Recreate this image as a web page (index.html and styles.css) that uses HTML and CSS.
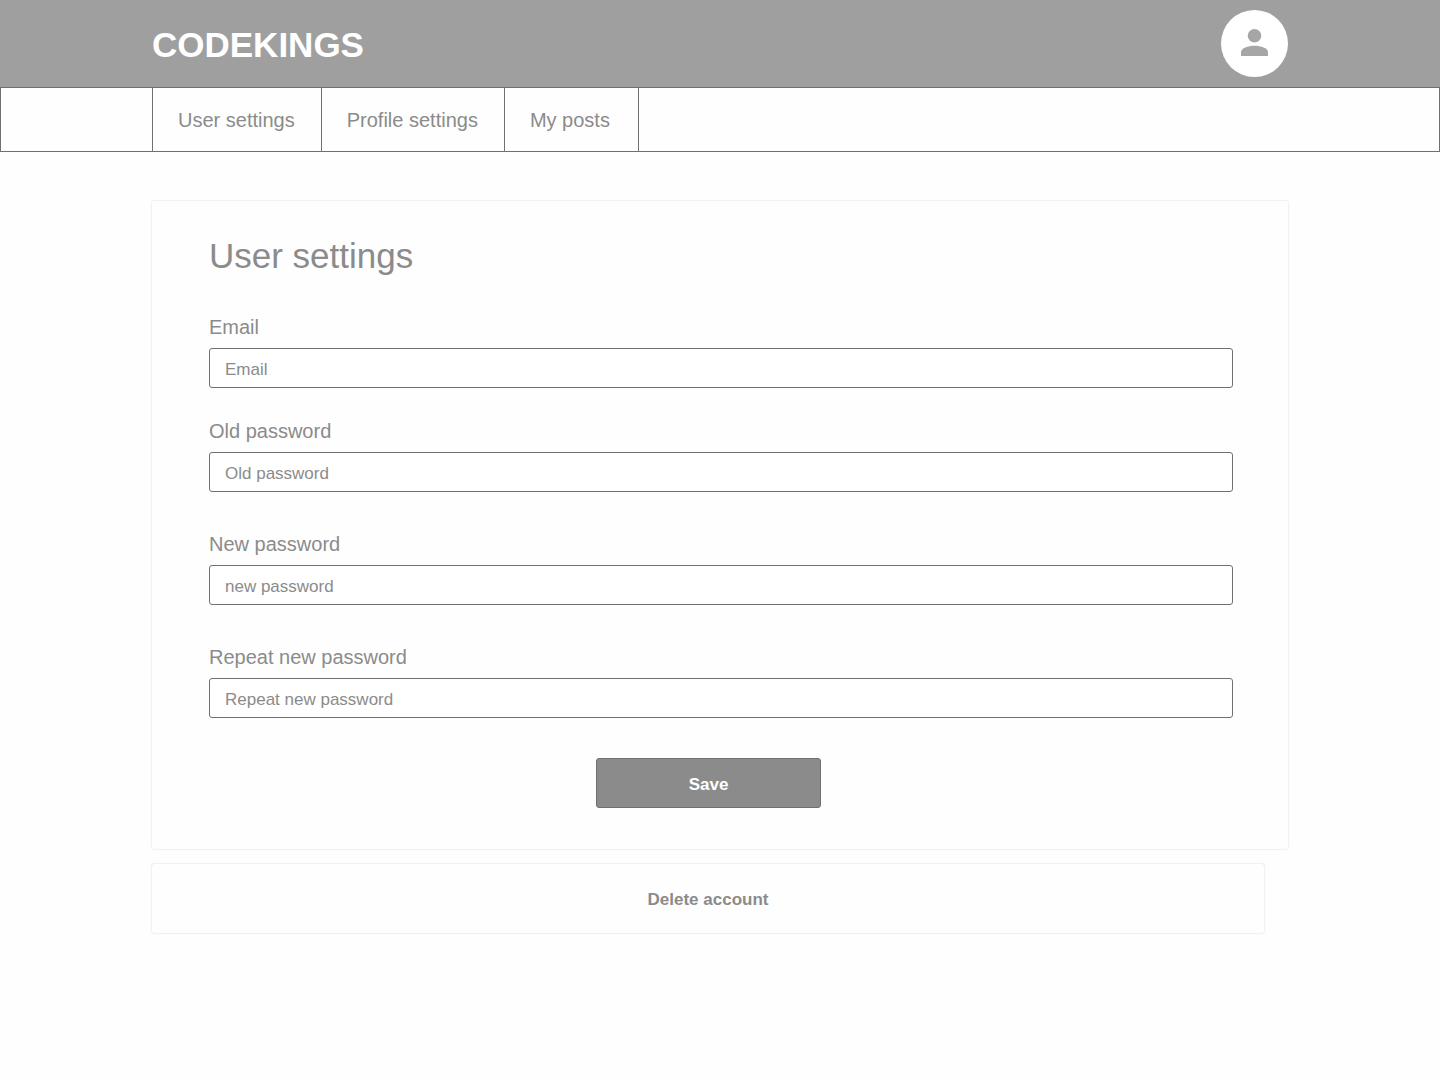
FILE: index.html
```html
<!DOCTYPE html>
<html lang="en">
<head>
<meta charset="utf-8">
<meta name="viewport" content="width=device-width, initial-scale=1">
<title>User settings - CODEKINGS</title>
<link rel="stylesheet" href="styles.css">
</head>
<body>
<header class="topbar">
  <a class="brand" href="#">CODEKINGS</a>
  <a class="avatar" href="#" aria-label="Profile">
    <svg class="avatar-icon" viewBox="0 0 27 27" aria-hidden="true">
      <circle cx="13.5" cy="6.8" r="6.8"/>
      <path d="M0 27v-4C0 19 7 16.700 13.500 16.700S27 19 27 23v4z"/>
    </svg>
  </a>
</header>
<nav class="tabs">
  <a class="tab" href="#">User settings</a>
  <a class="tab" href="#">Profile settings</a>
  <a class="tab" href="#">My posts</a>
</nav>
<main class="content">
  <form class="card settings">
    <h1 class="title">User settings</h1>
    <div class="fields">
      <div class="field field-first">
        <label class="label" for="email">Email</label>
        <input class="input" id="email" type="email" placeholder="Email">
      </div>
      <div class="field">
        <label class="label" for="old">Old password</label>
        <input class="input" id="old" type="password" placeholder="Old password">
      </div>
      <div class="field">
        <label class="label" for="new">New password</label>
        <input class="input" id="new" type="password" placeholder="new password">
      </div>
      <div class="field">
        <label class="label" for="repeat">Repeat new password</label>
        <input class="input" id="repeat" type="password" placeholder="Repeat new password">
      </div>
    </div>
    <div class="actions">
      <button class="save" type="submit">Save</button>
    </div>
  </form>
  <button class="card delete" type="button">Delete account</button>
</main>
</body>
</html>
```

FILE: styles.css
```css
* {
  box-sizing: border-box;
}

body {
  margin: 0;
  background: #fefefe;
  color: #8b8b8b;
  font-family: "Liberation Sans", Arial, sans-serif;
  font-size: 20px;
  line-height: 24px;
}

a {
  color: inherit;
  text-decoration: none;
}

.topbar {
  display: flex;
  align-items: center;
  justify-content: space-between;
  padding: 10px 152px;
  background: #9f9f9f;
}

.brand {
  padding-top: 2px;
  color: #fff;
  font-size: 35px;
  font-weight: bold;
  line-height: 40px;
}

.avatar {
  display: flex;
  align-items: center;
  justify-content: center;
  width: 67px;
  height: 67px;
  padding-bottom: 3px;
  border-radius: 50%;
  background: #fff;
}

.avatar-icon {
  width: 27px;
  height: 27px;
  fill: #a6a6a6;
}

.tabs {
  display: flex;
  height: 65px;
  padding-left: 151px;
  border: 1px solid #707070;
}

.tab {
  display: flex;
  align-items: center;
  min-width: 134px;
  padding: 0 26px 0 25px;
  border-right: 1px solid #707070;
}

.tab:first-child {
  border-left: 1px solid #707070;
}

.content {
  padding: 49px 152px;
}

.card {
  border-radius: 2px;
  background: #fefefe;
  box-shadow: 0 0 2px rgba(0, 0, 0, 0.2);
}

.settings {
  padding: 35px 55px 41px 57px;
}

.title {
  margin: 0 0 39px;
  font-size: 35px;
  font-weight: normal;
  line-height: 40px;
}

.fields {
  display: flex;
  flex-direction: column;
  gap: 40px;
}

.field {
  display: flex;
  flex-direction: column;
  gap: 9px;
}

.field-first {
  margin-bottom: -9px;
}

.input {
  width: 100%;
  height: 40px;
  padding: 4px 15px 0;
  border: 1px solid #707070;
  border-radius: 3px;
  background: #fff;
  color: #8b8b8b;
  font: inherit;
  font-size: 17px;
}

.input::placeholder {
  color: #8b8b8b;
  opacity: 1;
}

.actions {
  display: flex;
  justify-content: center;
  padding: 40px 25px 0 0;
}

.save {
  width: 225px;
  height: 50px;
  padding: 4px 0 0;
  border: 1px solid #707070;
  border-radius: 3px;
  background: #8b8b8b;
  color: #fff;
  font: bold 17px/20px "Liberation Sans", Arial, sans-serif;
}

.delete {
  display: block;
  width: calc(100% - 24px);
  height: 69px;
  margin-top: 15px;
  padding: 2px 0 0;
  border: 0;
  color: #8b8b8b;
  font: bold 17px/20px "Liberation Sans", Arial, sans-serif;
}
```
